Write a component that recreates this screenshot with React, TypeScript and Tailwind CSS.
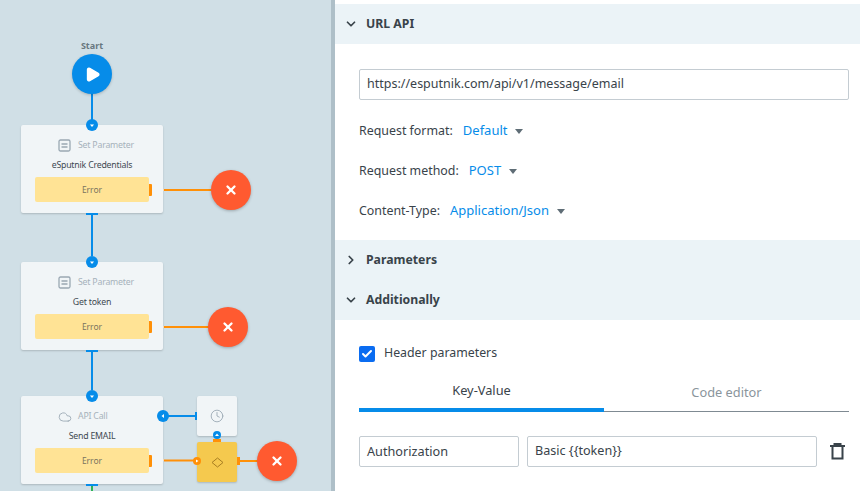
import React from 'react';
import { Check, ChevronDown, ChevronRight, Clock, Cloud, Play, X } from 'lucide-react';

const FONT = "font-['Noto_Sans',sans-serif]";

const ListIcon: React.FC = () => (
  <svg width="13" height="13" viewBox="0 0 13 13" fill="none" stroke="#9aa8b3" strokeWidth="1.3">
    <rect x="1" y="1" width="11" height="11" rx="1.5" />
    <path d="M3.5 5h6M3.5 8h6" />
  </svg>
);

const Port: React.FC<{
  className: string;
  color?: string;
  dir?: 'down' | 'left' | 'right' | 'up';
}> = ({ className, color = 'bg-[#068ce9]', dir = 'down' }) => {
  const d = {
    down: 'M1 2.5h4L3 5z',
    left: 'M4 1v4L1.5 3z',
    right: 'M2 1.5v3L4.5 3z',
    up: 'M1 4h4L3 1.5z',
  }[dir];
  return (
    <div className={`absolute rounded-full flex items-center justify-center ${color} ${className}`}>
      <svg width="6" height="6" viewBox="0 0 6 6" fill="#fff">
        <path d={d} />
      </svg>
    </div>
  );
};

const ErrorEnd: React.FC<{ className: string }> = ({ className }) => (
  <div
    className={`absolute w-10 h-10 rounded-full bg-[#ff5a30] shadow-[0_1px_3px_rgba(0,0,0,0.25)] flex items-center justify-center ${className}`}
  >
    <X size={14} color="#fff" strokeWidth={4} />
  </div>
);

const FlowNode: React.FC<{ className: string; label: string; title: string; icon: React.ReactNode }> = ({
  className,
  label,
  title,
  icon,
}) => (
  <div
    className={`absolute left-[21px] w-[142px] h-[88px] bg-[#f1f5f7] rounded-[2px] shadow-[0_1px_2px_rgba(0,0,0,0.18)] flex flex-col tracking-[-0.2px] ${className}`}
  >
    <div className="h-[39px] pl-[37px] pt-[2px] flex items-center text-[8.75px] text-[#a6b2bb]">
      <div className="w-[20px]">{icon}</div>
      <span>{label}</span>
    </div>
    <div className="h-[1px] mt-[1px] flex items-center justify-center text-[8.75px] text-[#3f4a52]">{title}</div>
    <div className="mt-[11px] ml-[14px] w-[114px] h-[25px] pt-[1px] rounded-[2px] bg-[#ffe395] flex items-center justify-center text-[8.5px] tracking-normal text-[#7a7460]">
      Error
    </div>
    <Port className="left-[65px] -top-[6px] w-3 h-3" />
    <div className="absolute left-[128px] top-[59px] w-[3px] h-3 bg-[#ff9008] rounded-r-[1px]" />
    <div className="absolute left-[65px] top-[88px] w-3 h-[2px] bg-[#068ce9]" />
  </div>
);

const Canvas: React.FC = () => (
  <div className={`relative w-[331px] h-full shrink-0 overflow-hidden bg-[#d0dfe6] ${FONT}`}>
    <svg className="absolute inset-0" width="331" height="491" fill="none" strokeWidth="2">
      <path d="M92 90V120M92 213V256M92 350V390M159 416H195" stroke="#068ce9" />
      <path d="M92 486V491" stroke="#2fb457" />
      <path d="M152 190H164M152 327H164M152 460H164" stroke="#ffe3c2" />
      <path d="M164 190H212M164 327H209M164 460.500H195M238 461H258" stroke="#ff9008" />
    </svg>

    <div className="absolute left-[72px] top-[39px] w-10 text-center text-[9px] font-bold text-[#68777f]">Start</div>
    <div className="absolute left-[72px] top-[54px] w-10 h-10 rounded-full bg-[#068ce9] shadow-[0_1px_3px_rgba(0,0,0,0.2)] flex items-center justify-center">
      <Play size={17} color="#fff" fill="#fff" className="ml-[1px]" />
    </div>

    <FlowNode className="top-[125px]" label="Set Parameter" title="eSputnik Credentials" icon={<ListIcon />} />
    <FlowNode className="top-[262px]" label="Set Parameter" title="Get token" icon={<ListIcon />} />
    <FlowNode
      className="top-[396px]"
      label="API Call"
      title="Send EMAIL"
      icon={<Cloud size={14} color="#9aa8b3" strokeWidth={1.5} />}
    />

    <Port className="left-[157px] top-[410px] w-3 h-3" dir="left" />

    <div className="absolute left-[197px] top-[396px] w-10 h-10 bg-[#f1f5f7] rounded-[2px] shadow-[0_1px_2px_rgba(0,0,0,0.18)] flex items-center justify-center">
      <Clock size={14} color="#9aa8b3" strokeWidth={1.5} />
    </div>
    <div className="absolute left-[195px] top-[412px] w-[2px] h-[8px] bg-[#068ce9]" />

    <div className="absolute left-[197px] top-[442px] w-10 h-10 bg-[#f5c94e] rounded-[2px] shadow-[0_1px_2px_rgba(0,0,0,0.18)] flex items-center justify-center">
      <svg width="13" height="11" viewBox="0 0 13 11" fill="none" stroke="#a87e22" strokeWidth="1">
        <path d="M6.500 1L12 5.500L6.500 10L1 5.500z" />
      </svg>
    </div>
    <Port className="left-[213px] top-[431px] w-2 h-2" dir="up" />
    <div className="absolute left-[213px] top-[439px] w-2 h-[3px] bg-[#ff9008]" />
    <Port className="left-[193px] top-[457px] w-2 h-2" color="bg-[#ff9008]" dir="right" />
    <div className="absolute left-[237px] top-[457px] w-[3px] h-[8px] bg-[#ff9008]" />

    <ErrorEnd className="left-[211px] top-[170px]" />
    <ErrorEnd className="left-[208px] top-[307px]" />
    <ErrorEnd className="left-[257px] top-[441px]" />
  </div>
);

const SectionHeader: React.FC<{ title: string; open?: boolean }> = ({ title, open = true }) => (
  <div className="h-10 bg-[#ebf3f7] flex items-center pl-[9px] gap-[8px] text-[12.25px] font-bold text-[#39434a]">
    {open ? (
      <ChevronDown size={14} color="#39434a" strokeWidth={3} />
    ) : (
      <ChevronRight size={14} color="#39434a" strokeWidth={3} />
    )}
    {title}
  </div>
);

const TextBox: React.FC<{ value: string; className: string }> = ({ value, className }) => (
  <div className={`h-[31px] border border-[#c4ccd2] rounded-[2px] flex items-center px-[7px] text-[#39434a] ${className}`}>
    {value}
  </div>
);

const SelectRow: React.FC<{ label: string; value: string }> = ({ label, value }) => (
  <div className="h-10 flex items-center text-[12.4px] text-[#39434a]">
    <span>{label}</span>
    <span className="ml-[10px] text-[13px] text-[#068ce9]">{value}</span>
    <svg className="ml-[8px]" width="8" height="5" viewBox="0 0 8 5" fill="#5f6d76">
      <path d="M0 0h8L4 5z" />
    </svg>
  </div>
);

const Panel: React.FC = () => (
  <div className={`flex-1 min-w-0 bg-white pt-1 ${FONT}`}>
    <SectionHeader title="URL API" />
    <div className="h-[196px] pt-[25px] pl-[24px] pr-[11px]">
      <TextBox value="https://esputnik.com/api/v1/message/email" className="w-full text-[12.5px]" />
      <div className="mt-[11px]">
        <SelectRow label="Request format:" value="Default" />
        <SelectRow label="Request method:" value="POST" />
        <SelectRow label="Content-Type:" value="Application/Json" />
      </div>
    </div>
    <SectionHeader title="Parameters" open={false} />
    <SectionHeader title="Additionally" />
    <div className="pt-[24px] pl-[24px] pr-[11px]">
      <div className="h-[19px] flex items-center gap-[9px] text-[12.35px] text-[#39434a]">
        <div className="w-4 h-4 rounded-[2px] bg-[#0a6cf1] flex items-center justify-center">
          <Check size={12} color="#fff" strokeWidth={4} />
        </div>
        <span className="pb-[1px]">Header parameters</span>
      </div>
      <div className="mt-[11px] flex h-[38px] text-[12.8px] border-b border-[#7f8a92]">
        <div className="w-[245px] h-[38px] border-b-[4px] border-[#068ce9] flex items-center justify-center text-[#39434a]">
          Key-Value
        </div>
        <div className="flex-1 flex items-center justify-center text-[#8a959c]">Code editor</div>
      </div>
      <div className="mt-[24px] flex items-center gap-2">
        <TextBox value="Authorization" className="w-40 text-[12.7px]" />
        <TextBox value="Basic {{token}}" className="w-[290px] text-[12.6px]" />
        <svg className="ml-[5px]" width="15" height="17" viewBox="0 0 15 17" fill="none" stroke="#39434a" strokeWidth="2">
          <path d="M0 3h15M4.500 3V1h6v2M2.500 3v12.500h10V3" />
        </svg>
      </div>
    </div>
  </div>
);

const App: React.FC = () => {
  return (
    <div className="flex w-[860px] h-[491px] overflow-hidden">
      <Canvas />
      <div className="w-1 shrink-0 bg-[#aebfc8]" />
      <Panel />
    </div>
  );
};

export default App;
